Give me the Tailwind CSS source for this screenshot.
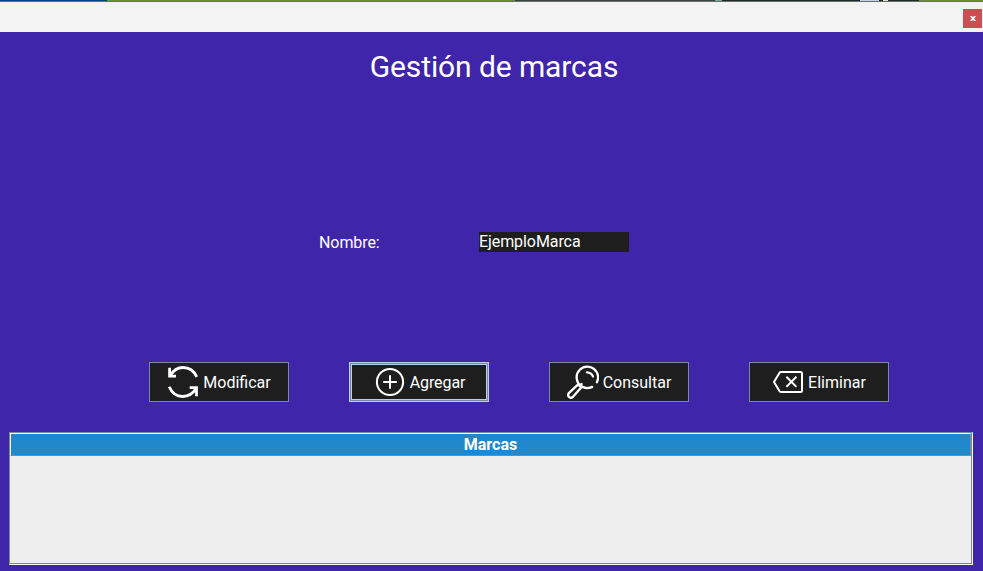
<!DOCTYPE html>
<html lang="es">
<head>
<meta charset="utf-8">
<title>Gestión de marcas</title>
<script src="https://cdn.jsdelivr.net/npm/@tailwindcss/browser@4"></script>
</head>
<body class="flex h-[571px] w-[983px] flex-col overflow-hidden bg-[#3f25a9] font-[Roboto,sans-serif] text-white">
  <div class="flex h-[2px] shrink-0 border-b border-[#6b6d66]">
    <div class="w-[107px] bg-[#07447f]"></div>
    <div class="w-[408px] bg-[#6d8f3c]"></div>
    <div class="w-[200px] bg-[#3c4240]"></div>
    <div class="w-[7px] bg-[#6fa7a3]"></div>
    <div class="w-[138px] bg-[#20292b]"></div>
    <div class="w-[19px] bg-[#c3cdea]"></div>
    <div class="w-[4px] bg-[#202820]"></div>
    <div class="w-[5px] bg-[#dde3cc]"></div>
    <div class="w-[31px] bg-[#20292b]"></div>
    <div class="grow bg-[#6d8f3c]"></div>
  </div>
  <header class="flex h-[30px] shrink-0 justify-end bg-[#f3f3f3] pt-[7px] pr-px">
    <button class="flex h-[19px] w-[19px] items-center justify-center bg-[#c75050]" aria-label="Cerrar">
      <svg class="h-[5px] w-[6px]" viewBox="0 0 6 5" fill="none" stroke="#fff" stroke-width="1.7"><path d="M.8 0 5.2 5M5.2 0 .8 5"/></svg>
    </button>
  </header>
  <main class="flex grow flex-col">
    <h1 class="h-[200px] pt-[15px] pl-[5px] text-center text-[30px] leading-[40px] tracking-[-0.1px]">Gestión de marcas</h1>
    <div class="flex h-[130px] items-start pl-[319px] text-[16px] leading-5 tracking-[-0.08px]">
      <label class="w-[160px] pt-px">Nombre:</label>
      <div class="h-5 w-[150px] bg-[#1e1e1e] leading-[19px]">EjemploMarca</div>
    </div>
    <div class="flex h-[70px] items-start gap-[60px] pl-[149px] text-[16px]">
      <button class="flex h-10 w-[140px] items-center justify-center gap-1 border border-[#7a8a99] bg-[#1e1e1e]">
        <svg class="h-[34px] w-[32px]" viewBox="0 0 32 34" fill="none" stroke="#fff" stroke-width="2.8"><path d="M2.6 2.7V11.2H9M3 10.8C6 5.6 10.6 2.5 16 2.5 22.2 2.5 27 6 29.7 11.8M2.2 21.8C4.8 28 9.8 31.5 15.7 31.5 21.5 31.5 26.2 28.2 29.4 23M22.7 22.7H29.5V31.2"/></svg>
        <span class="pt-[2px]">Modificar</span>
      </button>
      <button class="flex h-10 w-[140px] items-center justify-center gap-1 border border-[#b8cfe5] bg-[#1e1e1e] pl-px tracking-[-0.08px] shadow-[inset_0_0_0_1px_#7a8a99,inset_0_0_0_2px_#b8cfe5]">
        <svg class="h-[32px] w-[32px]" viewBox="0 0 32 32" fill="none" stroke="#fff" stroke-width="2"><circle cx="16" cy="16" r="13.1"/><path d="M16 9.2V22.8M9.2 16H22.8"/></svg>
        <span class="pt-[2px]">Agregar</span>
      </button>
      <button class="flex h-10 w-[140px] items-center justify-center gap-1 border border-[#7a8a99] bg-[#1e1e1e]">
        <svg class="h-[34px] w-[32px]" viewBox="0 0 32 34" fill="none" stroke="#fff" stroke-width="2.3" stroke-linecap="round" stroke-linejoin="round"><path d="M25.2 21.9A10.7 10.7 0 1 1 29.9 17.2M11.2 19.4 1.8 28.2C-.2 31.4 3.6 34.4 6 31.7L14.2 22.4M11.2 19.4 14.2 22.4M12.8 21 14.6 19M20 7.4C23 7.6 25.2 9.1 26 11.5"/></svg>
        <span class="pt-[2px]">Consultar</span>
      </button>
      <button class="flex h-10 w-[140px] items-center justify-center gap-1 border border-[#7a8a99] bg-[#1e1e1e]">
        <svg class="h-[32px] w-[32px]" viewBox="0 0 32 32" fill="none" stroke="#fff" stroke-width="2" stroke-linejoin="round"><path d="M9 6H28.5Q30 6 30 7.5V24.5Q30 26 28.5 26H9Q8 26 7.4 25L2 16 7.4 7Q8 6 9 6ZM14.4 10.8 24.4 20.9M24.4 10.8 14.4 20.9"/></svg>
        <span class="pt-[2px]">Eliminar</span>
      </button>
    </div>
    <section class="ml-[9px] h-[133px] w-[964px] border-t border-r border-b border-l border-t-[#7a8a99] border-r-white border-b-white border-l-[#7a8a99]">
      <div class="flex h-full flex-col border-r border-b border-[#7a8a99] bg-[#eeeeee]">
        <div class="h-[23px] border-t border-r border-b border-l border-t-white border-r-[#7a8a99] border-b-[#7a8a99] border-l-white bg-[#2188cb] text-center text-[16px] leading-[21px] font-bold">Marcas</div>
      </div>
    </section>
  </main>
</body>
</html>
